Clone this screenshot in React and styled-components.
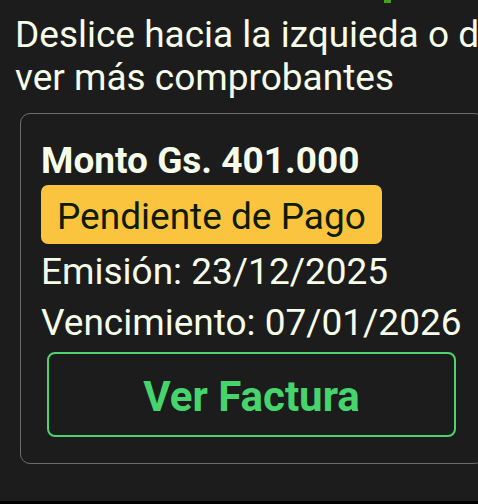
import React from "react";
import styled, { createGlobalStyle } from "styled-components";

const GlobalStyle = createGlobalStyle`
  *, *::before, *::after { box-sizing: border-box; }
  body {
    margin: 0;
    background: #1c1c1c;
    color: #f6fcea;
    font-family: Roboto, "Liberation Sans", sans-serif;
  }
`;

const Page = styled.main`
  min-height: 100vh;
  display: flex;
  flex-direction: column;
  overflow: hidden;
  border-bottom: 3px solid #000;
`;

const HeadingTail = styled.div`
  width: 7px;
  height: 3px;
  margin-left: 384px;
  background: #43a31d;
`;

const Hint = styled.p`
  margin: 10px 0 14px 15px;
  font-size: 37px;
  line-height: 43px;
  white-space: nowrap;
`;

const Card = styled.article`
  margin: 0 -6px 0 20px;
  padding: 22px 27px 26px 20px;
  border: 1px solid #6d6d6d;
  border-radius: 10px;
  font-size: 37px;
`;

const Amount = styled.h2`
  margin: 0;
  font-size: 37px;
  font-weight: 700;
  line-height: 49px;
`;

const Status = styled.span`
  display: block;
  width: fit-content;
  padding: 10px 16px 6px;
  border-radius: 7px;
  background: #fbc43f;
  color: #0d1c00;
  line-height: 43px;
`;

const Details = styled.div`
  padding-top: 2px;
`;

const Detail = styled.p`
  margin: 0;
  line-height: 51px;
  white-space: nowrap;
`;

const InvoiceButton = styled.button`
  display: block;
  width: calc(100% - 6px);
  margin: 4px 0 0 6px;
  padding: 18px 16px 13px;
  border: 2px solid #4cd470;
  border-radius: 8px;
  background: transparent;
  color: #46d56d;
  font-family: inherit;
  font-size: 42px;
  font-weight: 700;
  line-height: 50px;
  cursor: pointer;
`;

export default function App() {
  return (
    <>
      <GlobalStyle />
      <Page>
        <HeadingTail aria-hidden="true" />
        <Hint>
          Deslice hacia la izquieda o d
          <br />
          ver más comprobantes
        </Hint>
        <Card>
          <Amount>Monto Gs. 401.000</Amount>
          <Status>Pendiente de Pago</Status>
          <Details>
            <Detail>Emisión: 23/12/2025</Detail>
            <Detail>Vencimiento: 07/01/2026</Detail>
          </Details>
          <InvoiceButton type="button">Ver Factura</InvoiceButton>
        </Card>
      </Page>
    </>
  );
}
